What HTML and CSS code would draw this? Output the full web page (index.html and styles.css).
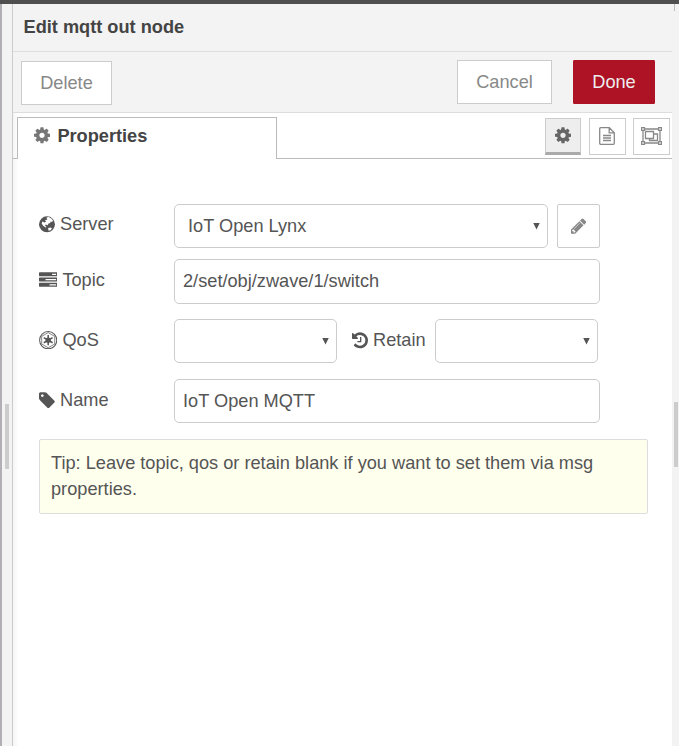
FILE: index.html
```html
<!DOCTYPE html>
<html lang="en">
<head>
<meta charset="utf-8">
<title>Edit mqtt out node</title>
<link rel="stylesheet" href="styles.css">
</head>
<body>
<svg class="defs" aria-hidden="true">
  <symbol id="cog" viewBox="128 0 1536 1792"><path d="M1152 896q0-106-75-181t-181-75-181 75-75 181 75 181 181 75 181-75 75-181zm512-109v222q0 12-8 23t-20 13l-185 28q-19 54-39 91 35 50 107 138 10 12 10 25t-9 23q-27 37-99 108t-94 71q-12 0-26-9l-138-108q-44 23-91 38-16 136-29 186-7 28-36 28h-222q-14 0-24.5-8.5t-11.5-21.5l-28-184q-49-16-90-37l-141 107q-10 9-25 9-14 0-25-11-126-114-165-168-7-10-7-23 0-12 8-23 15-21 51-66.5t54-70.5q-27-50-41-99l-183-27q-13-2-21-12.5t-8-23.5v-222q0-12 8-23t19-13l186-28q14-46 39-92-40-57-107-138-10-12-10-24 0-10 9-23 26-36 98.5-107.5t94.5-71.5q13 0 26 10l138 107q44-23 91-38 16-136 29-186 7-28 36-28h222q14 0 24.5 8.5t11.5 21.5l28 184q49 16 90 37l142-107q9-9 24-9 13 0 25 10 129 119 165 170 7 8 7 22 0 12-8 23-15 21-51 66.5t-54 70.5q26 50 41 98l183 28q13 2 21 12.5t8 23.5z"/></symbol>
</svg>
<div class="topbar"></div>
<div class="workspace">
  <div class="canvas-edge"></div>
  <div class="separator"><div class="grip"></div></div>
  <main class="tray">
    <header class="title">Edit mqtt out node</header>
    <div class="toolbar">
      <button class="btn delete">Delete</button>
      <button class="btn cancel">Cancel</button>
      <button class="btn done">Done</button>
    </div>
    <nav class="tabs">
      <div class="tab"><svg class="icon"><use href="#cog"/></svg><span>Properties</span></div>
      <div class="tab-buttons">
        <button class="tab-btn active"><svg class="icon"><use href="#cog"/></svg></button>
        <button class="tab-btn"><svg class="doc" viewBox="0 0 16 18"><path d="M1.700.7H10.300L15.300 5.700V16.300Q15.300 17.300 14.300 17.300H1.700Q.7 17.300.7 16.300V1.700Q.7.7 1.700.7ZM10.200.7V5.800H15.300M4 8.500H12M4 11H12M4 13.500H12"/></svg></button>
        <button class="tab-btn"><svg class="group" viewBox="0 0 21 18"><path d="M2 2H19V16H2ZM4.500 4.500H12.500V11.500H4.500ZM12.500 7H16.500V13.500H8.500V11.500"/><path class="handle" d="M.6.6H3.400V3.400H.6ZM17.600.6H20.400V3.400H17.600ZM.6 14.600H3.400V17.400H.6ZM17.600 14.600H20.400V17.400H17.600Z"/></svg></button>
      </div>
    </nav>
    <form class="form">
      <div class="row">
        <label class="label"><svg class="icon" viewBox="0 0 15.430 18"><circle cx="7.700" cy="9" r="7.700"/><path class="land" d="M7.200 2.500 9.400 2 12.200 3.500 13.500 5.300 12.700 6.800 11.300 6.200 10.800 7.600 9.200 8.200 8.300 9.800 6.500 9.200 5.800 10.300 7.200 11.300 6.500 12 4 10.300 2.600 8.200 3.200 6.300 5.200 7.200 6.800 6.200 5.800 4.800 8 4.500ZM8.800 12.600 10.800 12 12.600 12.700 11.200 14.600 9.200 15.300Z"/></svg><span>Server</span></label>
        <div class="field select server"><span>IoT Open Lynx</span><i class="arrow"></i></div>
        <button type="button" class="edit"><svg class="icon" viewBox="128 0 1536 1792"><path d="M491 1536l91-91-235-235-91 91v107h128v128h107zm523-928q0-22-22-22-10 0-17 7l-542 542q-7 7-7 17 0 22 22 22 10 0 17-7l542-542q7-7 7-17zm-54-192l416 416-832 832h-416v-416zm683 96q0 53-37 90l-166 166-416-416 166-165q36-38 90-38 53 0 91 38l235 234q37 39 37 91z"/></svg></button>
      </div>
      <div class="row topic">
        <label class="label"><svg class="icon wide" viewBox="0 0 1792 1792"><path d="M1024 1408h640v-128h-640v128zm-384-512h1024v-128h-1024v128zm640-512h384v-128h-384v128zm512 832v256q0 26-19 45t-45 19h-1664q-26 0-45-19t-19-45v-256q0-26 19-45t45-19h1664q26 0 45 19t19 45zm0-512v256q0 26-19 45t-45 19h-1664q-26 0-45-19t-19-45v-256q0-26 19-45t45-19h1664q26 0 45 19t19 45zm0-512v256q0 26-19 45t-45 19h-1664q-26 0-45-19t-19-45v-256q0-26 19-45t45-19h1664q26 0 45 19t19 45z"/></svg><span>Topic</span></label>
        <div class="field">2/set/obj/zwave/1/switch</div>
      </div>
      <div class="row">
        <label class="label"><svg class="icon wide" viewBox="0 0 18 18"><circle class="ring" cx="9" cy="9" r="8.400"/><path class="hex" d="M9 1.600 15.400 5.300V12.700L9 16.400 2.600 12.700V5.300Z"/><circle cx="9" cy="9" r="2.600"/><path class="spokes" d="M9 4V14M4.670 6.500 13.330 11.500M4.670 11.500 13.330 6.500"/></svg><span>QoS</span></label>
        <div class="field select qos"><i class="arrow"></i></div>
        <label class="label retain-label"><svg class="icon" viewBox="128 0 1536 1792"><path d="M1664 896q0 156-61 298t-164 245-245 164-298 61q-172 0-327-72.500t-264-204.500q-7-10-6.500-22.500t8.500-20.500l137-138q10-9 25-9 16 2 23 12 73 95 179 147t225 52q104 0 198.500-40.500t163.500-109.500 109.500-163.500 40.500-198.500-40.500-198.500-109.500-163.500-163.500-109.500-198.500-40.500q-98 0-188 35.500t-160 101.500l137 138q31 30 14 69-17 40-59 40h-448q-26 0-45-19t-19-45v-448q0-42 40-59 39-17 69 14l130 129q107-101 244.500-156.500t284.500-55.500q156 0 298 61t245 164 164 245 61 298zm-640-288v448q0 14-9 23t-23 9h-320q-14 0-23-9t-9-23v-64q0-14 9-23t23-9h224v-352q0-14 9-23t23-9h64q14 0 23 9t9 23z"/></svg><span>Retain</span></label>
        <div class="field select retain"><i class="arrow"></i></div>
      </div>
      <div class="row">
        <label class="label"><svg class="icon" viewBox="128 0 1536 1792"><path d="M576 448q0-53-37.500-90.500t-90.500-37.500-90.500 37.500-37.500 90.500 37.500 90.500 90.500 37.500 90.500-37.500 37.500-90.500zm1067 576q0 53-37 90l-491 492q-39 37-91 37-53 0-90-37l-715-716q-38-37-64.500-101t-26.500-117v-416q0-52 38-90t90-38h416q53 0 117 26.500t102 64.500l715 714q37 39 37 91z"/></svg><span>Name</span></label>
        <div class="field">IoT Open MQTT</div>
      </div>
      <div class="tip">Tip: Leave topic, qos or retain blank if you want to set them via msg properties.</div>
    </form>
  </main>
  <div class="right-edge"><div class="tick"></div><div class="scroll"></div></div>
</div>
</body>
</html>
```
FILE: styles.css
```css
* { box-sizing: border-box; }
body {
  margin: 0;
  height: 746px;
  overflow: hidden;
  background: #f3f3f3;
  color: #555;
  font: 18.2px/26px "Liberation Sans", Arial, sans-serif;
}
button { font: inherit; padding: 0; }
svg { display: block; flex: none; fill: currentColor; }
.defs { display: none; }
.topbar { height: 4px; background: #4f4f4f; }
.workspace { display: flex; height: 742px; }
.canvas-edge { width: 2px; background: #b1afb3; }
.separator { width: 10px; padding: 400px 0 0 3px; }
.grip { width: 4px; height: 65px; background: #ccc; }
.tray {
  width: 660px;
  border-left: 1px solid #ccc;
  background: linear-gradient(90deg, #f5f5f5, #fff 6px);
}
.title {
  height: 48px;
  padding: 10px 0 0 10.500px;
  border-bottom: 1px solid #ddd;
  background: #f3f3f3;
  color: #444;
  font-weight: bold;
}
.toolbar {
  display: flex;
  height: 61px;
  padding: 8px 17px 0 8px;
  border-bottom: 1px solid #ddd;
  background: #f3f3f3;
}
.btn { height: 44px; border: 1px solid #ccc; background: #fff; color: #888; }
.delete { width: 91px; margin-top: 1px; }
.cancel { width: 95px; margin-left: auto; }
.done { width: 82px; margin-left: 21px; border-color: #ad1225; border-radius: 1px; background: #ad1225; color: #eee; }
.tabs { display: flex; height: 46px; padding: 4px 2px 0 4px; box-shadow: inset 0 -1px #bbb; }
.tab {
  display: flex;
  width: 260px;
  height: 42px;
  padding: 5px 0 0 16px;
  border: 1px solid #bbb;
  border-bottom: 0;
  background: #fff;
  color: #444;
  font-weight: bold;
}
.tab .icon { margin: 3px 7.400px 0 0; color: #777; }
.tab-buttons { display: flex; gap: 7px; margin: 1px 0 0 auto; }
.tab-btn {
  display: flex;
  align-items: center;
  justify-content: center;
  width: 37px;
  height: 37px;
  border: 1px solid #ccc;
  background: #fff;
  color: #888;
}
.active { width: 36px; margin-right: 1px; border-bottom: 3px solid #aaa; background: #eee; color: #666; }
.doc { width: 16px; height: 18px; margin: -2px 1px 0 0; }
.group { width: 21px; height: 18px; margin-top: -2px; }
.doc path, .group path { fill: none; stroke: #888; stroke-width: 1.300; }
.group .handle { fill: #fff; }
.icon { width: 16px; height: 18.670px; }
.wide { width: 18.400px; height: 18.400px; }
.form { padding: 45px 24px 0 26px; }
.row { display: flex; height: 44px; margin-bottom: 16px; }
.row:first-child { margin-bottom: 11px; }
.topic { height: 45px; margin-bottom: 15px; }
.label { display: flex; gap: 5px; width: 135px; padding-top: 8px; }
.row:first-child .label { padding-top: 7px; }
.label .icon { margin-top: 3.500px; }
.land { fill: #fff; }
.ring, .hex { fill: none; stroke: currentColor; stroke-width: 1; }
.hex { stroke-width: .7; }
.spokes { stroke: currentColor; stroke-width: 1.500; }
.field {
  display: flex;
  align-items: center;
  width: 426px;
  height: 100%;
  padding-left: 8px;
  border: 1px solid #ccc;
  border-radius: 5px;
  background: #fff;
}
.topic .field { padding-bottom: 1px; }
.select { justify-content: space-between; padding: 0 7px 0 13px; }
.server { width: 374px; }
.arrow { width: 7px; height: 7px; margin-left: auto; background: #555; clip-path: polygon(0 0, 100% 0, 50% 100%); }
.edit {
  display: flex;
  align-items: center;
  justify-content: center;
  width: 43px;
  height: 44px;
  margin-left: 9px;
  border: 1px solid #ccc;
  border-radius: 2px;
  background: #fff;
  color: #888;
}
.edit .icon { width: 15.400px; height: 18px; }
.qos, .retain { width: 163px; }
.retain-label { width: 83px; margin-left: 15px; }
.tip {
  height: 75px;
  padding: 10px 11px;
  border: 1px solid #ddd;
  border-radius: 2px;
  background: #ffffee;
}
.right-edge { width: 7px; padding-left: 2px; }
.tick { width: 1px; height: 7px; background: #bbb; }
.scroll { width: 4px; height: 65px; margin-top: 391px; background: #ccc; }
```
